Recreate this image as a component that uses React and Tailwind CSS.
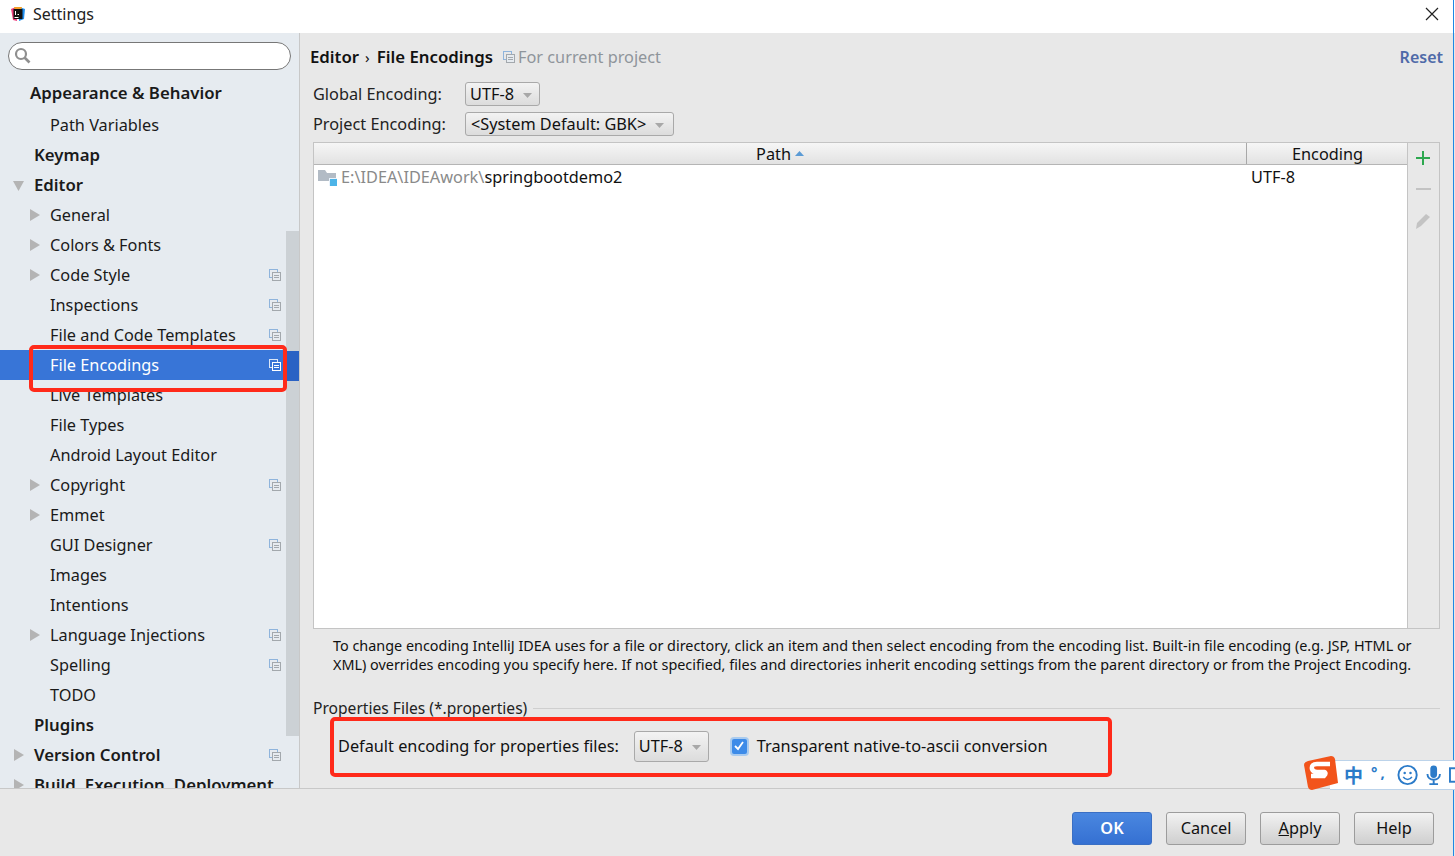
import React from "react";

const F = "[font-family:'Noto_Sans','Noto_Sans_CJK_SC',sans-serif]";

const rows = [
  { t: "Appearance & Behavior", bold: true, x: 30, h: "h-[32px] pb-[2px]" },
  { t: "Path Variables" },
  { t: "Keymap", bold: true },
  { t: "Editor", bold: true, open: true },
  { t: "General", arrow: true },
  { t: "Colors & Fonts", arrow: true },
  { t: "Code Style", arrow: true, copy: true },
  { t: "Inspections", copy: true },
  { t: "File and Code Templates", copy: true },
  { t: "File Encodings", copy: true, sel: true },
  { t: "Live Templates" },
  { t: "File Types" },
  { t: "Android Layout Editor" },
  { t: "Copyright", arrow: true, copy: true },
  { t: "Emmet", arrow: true },
  { t: "GUI Designer", copy: true },
  { t: "Images" },
  { t: "Intentions" },
  { t: "Language Injections", arrow: true, copy: true },
  { t: "Spelling", copy: true },
  { t: "TODO" },
  { t: "Plugins", bold: true },
  { t: "Version Control", bold: true, arrow: true, copy: true },
  { t: "Build, Execution, Deployment", bold: true, arrow: true },
];

function CopyIcon({ sel, className = "" }) {
  const a = sel ? "#dbe6f7" : "#8fb4dc";
  const b = sel ? "#ffffff" : "#a3a8ad";
  return (
    <svg width="12" height="12" viewBox="0 0 12 12" className={className}>
      <rect x="0.5" y="0.5" width="8" height="8" fill="none" stroke={a} />
      <rect x="3.5" y="3.5" width="8" height="8" fill={sel ? "#3875d7" : "#e6ebf0"} stroke={b} />
      <path d="M5 6.500h5M5 8.500h5" stroke={b} />
    </svg>
  );
}

function Row({ r }) {
  const pad = r.bold ? "pl-[34px]" : "pl-[50px]";
  return (
    <div
      className={`relative flex items-center shrink-0 ${r.h || "h-[30px]"} ${r.sel ? "bg-[#3875d7] text-white" : "text-[#1a1a1a]"} ${r.bold ? "font-semibold text-[16.800px]" : ""} ${r.x ? "pl-[30px]" : pad}`}
    >
      {r.arrow && (
        <svg width="10" height="12" viewBox="0 0 10 12" className={`absolute top-[9px] ${r.bold ? "left-[14px]" : "left-[30px]"}`}>
          <path d="M0 0l10 6-10 6z" fill="#b4b4b4" />
        </svg>
      )}
      {r.open && (
        <svg width="12" height="10" viewBox="0 0 12 10" className="absolute top-[11px] left-[13px]">
          <path d="M0 0h11l-5.500 10z" fill="#b4b4b4" />
        </svg>
      )}
      <span className="whitespace-nowrap">{r.t}</span>
      {r.copy && <CopyIcon sel={r.sel} className="absolute left-[269px] top-[9px]" />}
    </div>
  );
}

function Combo({ children, className = "" }) {
  return (
    <div className={`flex items-center h-[24px] border border-[#a9a9a9] rounded-[3px] bg-gradient-to-b from-[#f3f3f3] to-[#dcdcdc] text-[#111] ${className}`}>
      <span className="whitespace-nowrap">{children}</span>
      <svg width="9" height="5" viewBox="0 0 9 5" className="ml-[9px] mt-[2px]"><path d="M0 0h9L4.500 5z" fill="#a8a8a8" /></svg>
    </div>
  );
}

function Btn({ children, primary }) {
  return (
    <div
      className={`flex items-center justify-center w-[80px] h-[33px] pb-[1px] rounded-[3px] border ${
        primary
          ? "border-[#3a6fc4] bg-gradient-to-b from-[#4a87e0] to-[#3570d2] text-white font-semibold"
          : "border-[#9c9c9c] bg-gradient-to-b from-[#f2f2f2] to-[#cfcfcf] text-[#111]"
      }`}
    >
      {children}
    </div>
  );
}

export default function App() {
  return (
    <div className={`relative w-[1455px] h-[856px] overflow-hidden bg-[#e8e8e8] text-[16.300px] leading-[22px] flex flex-col ${F}`}>
      {/* title bar */}
      <div className="h-[33px] bg-white flex items-center shrink-0 pl-[10px] pb-[5px] text-[#222] text-[16px]">
        <svg width="16" height="16" viewBox="0 0 16 16" className="mr-[7px]">
          <path d="M1 3l5-2 1 14-4-1z" fill="#ee3d7c" />
          <path d="M9 1l6 2-1 10-5 2z" fill="#1f8ff0" />
          <path d="M4 1h8l-1 3H5z" fill="#f59f25" />
          <rect x="3.500" y="3" width="9" height="10" fill="#111" />
          <rect x="4.500" y="11" width="4" height="1" fill="#fff" />
          <path d="M5 5h1v4H5zM8 5h1v3H7.500v1H9V5z" fill="#fff" />
        </svg>
        <span>Settings</span>
        <svg width="14" height="14" viewBox="0 0 14 14" className="ml-auto mr-[16px]">
          <path d="M1 1l12 12M13 1L1 13" stroke="#222" strokeWidth="1.200" fill="none" />
        </svg>
      </div>

      {/* body */}
      <div className="flex h-[755px] shrink-0">
        {/* sidebar */}
        <div className="relative w-[300px] shrink-0 bg-[#e6ebf0] border-r border-[#c8c8c8] overflow-hidden flex flex-col">
          <div className="shrink-0 mx-[8px] mt-[9px] h-[28px] w-[283px] rounded-full border border-[#777] bg-white flex items-center pl-[5px]">
            <svg width="18" height="18" viewBox="0 0 18 18">
              <circle cx="7" cy="7" r="5" fill="none" stroke="#8f8f8f" strokeWidth="2.200" />
              <path d="M10.500 10.500L15.500 15.500" stroke="#8f8f8f" strokeWidth="2.600" />
            </svg>
          </div>
          <div className="h-[8px] shrink-0" />
          <div className="flex flex-col">
            {rows.map((r) => (
              <Row key={r.t} r={r} />
            ))}
          </div>
          {/* scrollbar */}
          <div className="absolute left-[286px] top-[198px] w-[13px] h-[505px] bg-[#ccd1d5]" />
          <div className="absolute left-[286px] top-[318px] w-[13px] h-[30px] bg-[#2a62c4]" />
        </div>

        {/* content */}
        <div className="flex-1 min-w-0 flex flex-col pl-[13px] pr-[15px] relative">
          <div className="flex items-center h-[24px] mt-[12px] -ml-[3px] text-[#111]">
            <span className="font-semibold text-[16.800px]">Editor</span>
            <span className="ml-[6px] mr-[7px] text-[15px]">›</span>
            <span className="font-semibold text-[16.800px]">File Encodings</span>
            <CopyIcon className="ml-[10px] mr-[3px]" />
            <span className="text-[#8f959b]">For current project</span>
            <span className="ml-auto -mr-[3px] font-semibold text-[#4f6aa8] text-[16px]">Reset</span>
          </div>
          <div className="flex items-center h-[24px] mt-[13px] text-[#222]">
            <span className="w-[152px]">Global Encoding:</span>
            <Combo className="pl-[4px] pr-[7px]">UTF-8</Combo>
          </div>
          <div className="flex items-center h-[24px] mt-[6px] text-[#222]">
            <span className="w-[152px]">Project Encoding:</span>
            <Combo className="pl-[5px] pr-[9px]">&lt;System Default: GBK&gt;</Combo>
          </div>

          {/* table */}
          <div className="flex h-[487px] mt-[6px] border border-[#c4c4c4]">
            <div className="flex-1 min-w-0 flex flex-col bg-white border-r border-[#c4c4c4]">
              <div className="flex h-[22px] shrink-0 border-b border-[#b5b5b5] bg-gradient-to-b from-[#f6f6f6] to-[#e2e2e2] text-[#111]">
                <div className="w-[933px] flex items-center justify-center border-r border-[#a8a8a8]">
                  Path
                  <svg width="9" height="5" viewBox="0 0 9 5" className="ml-[4px]"><path d="M0 5h9L4.500 0z" fill="#5b9bd5" /></svg>
                </div>
                <div className="flex-1 flex items-center justify-center pl-[1px]">Encoding</div>
              </div>
              <div className="flex items-center h-[24px] text-[#111]">
                <div className="w-[933px] flex items-center pl-[4px]">
                  <svg width="19" height="17" viewBox="0 0 19 17" className="mr-[4px]">
                    <path d="M0 1h7l2 3h9v8H0z" fill="#b2bbc5" />
                    <rect x="11" y="9" width="8" height="8" fill="#e8f2fb" />
                    <rect x="12" y="10" width="7" height="7" fill="#4db4e8" />
                  </svg>
                  <span className="text-[#8a8a8a]">E:\IDEA\IDEAwork\</span>
                  <span>springbootdemo2</span>
                </div>
                <span className="pl-[4px]">UTF-8</span>
              </div>
            </div>
            <div className="w-[31px] shrink-0 flex flex-col items-center pt-[7px]">
              <svg width="16" height="16" viewBox="0 0 16 16" className="-ml-[2px]"><path d="M8 1v14M1 8h14" stroke="#2da84f" strokeWidth="2" /></svg>
              <svg width="16" height="16" viewBox="0 0 16 16" className="mt-[15px] -ml-[2px]"><path d="M1 8h15" stroke="#c3c3c3" strokeWidth="2" /></svg>
              <svg width="16" height="18" viewBox="0 0 16 18" className="mt-[15px] -ml-[2px]"><path d="M1 17l1-6 9-9 4 3-9 9z" fill="#c3c3c3" /></svg>
            </div>
          </div>

          <p className="ml-[20px] mt-[7px] w-[1100px] text-[14.400px] leading-[19px] text-[#111]">
            To change encoding IntelliJ IDEA uses for a file or directory, click an item and then select encoding from the encoding list. Built-in file encoding (e.g. JSP, HTML or XML) overrides encoding you specify here. If not specified, files and directories inherit encoding settings from the parent directory or from the Project Encoding.
          </p>

          <div className="flex items-center mt-[23px] h-[22px] text-[15.600px] text-[#222]">
            <span className="whitespace-nowrap">Properties Files (*.properties)</span>
            <div className="flex-1 h-px bg-[#cfcfcf] ml-[6px]" />
          </div>

          <div className="flex items-center mt-[11px] ml-[25px] h-[32px] text-[#111]">
            <span className="whitespace-nowrap">Default encoding for properties files:</span>
            <Combo className="ml-[15px] h-[31px] pl-[4px] pr-[7px]">UTF-8</Combo>
            <div className="ml-[21px] w-[19px] h-[19px] rounded-[4px] bg-[#3d8be8] border-2 border-[#a9cbef] flex items-center justify-center">
              <svg width="12" height="12" viewBox="0 0 12 12"><path d="M2 6l3 3 5-7" fill="none" stroke="#fff" strokeWidth="1.800" /></svg>
            </div>
            <span className="ml-[8px] whitespace-nowrap">Transparent native-to-ascii conversion</span>
          </div>
        </div>
      </div>

      {/* footer */}
      <div className="flex-1 border-t border-[#c8c8c8] flex items-start justify-end gap-[14px] pt-[23px] pr-[21px] text-[#111]">
        <Btn primary>OK</Btn>
        <Btn>Cancel</Btn>
        <Btn><span><u>A</u>pply</span></Btn>
        <Btn>Help</Btn>
      </div>

      {/* screen edge behind the dialog */}
      <div className="absolute left-[1453px] top-0 w-px h-full bg-[#1e88e5]" />

      {/* annotations */}
      <div className="absolute left-[29px] top-[345px] w-[258px] h-[47px] border-[4px] border-[#ff2a1a] rounded-[5px]" />
      <div className="absolute left-[330px] top-[717px] w-[782px] h-[60px] border-[4px] border-[#ff2a1a] rounded-[5px]" />

      {/* IME bar */}
      <div className="absolute left-[1330px] top-[760px] w-[125px] h-[30px] bg-white border-y border-[#bcd3ea] flex items-center pl-[14px] text-[#2b7bc9]">
        <span className="text-[19px] font-bold [font-family:'Noto_Sans_CJK_SC',sans-serif]">中</span>
        <span className="ml-[8px] text-[15px] font-bold tracking-[3px] -mt-[6px]">°,</span>
        <svg width="22" height="22" viewBox="0 0 22 22" className="ml-[9px]">
          <circle cx="11" cy="11" r="9.500" fill="none" stroke="#2b7bc9" strokeWidth="2" />
          <circle cx="8" cy="9" r="1.300" fill="#2b7bc9" /><circle cx="14" cy="9" r="1.300" fill="#2b7bc9" />
          <path d="M6.500 13c2 3.500 7 3.500 9 0" fill="none" stroke="#2b7bc9" strokeWidth="1.500" />
        </svg>
        <svg width="16" height="22" viewBox="0 0 16 22" className="ml-[8px]">
          <rect x="4.500" y="1" width="7" height="13" rx="3.500" fill="#2b7bc9" />
          <path d="M1.500 10c0 8 13 8 13 0M8 16v4M3.500 20.500h9" fill="none" stroke="#2b7bc9" strokeWidth="2" />
        </svg>
        <svg width="6" height="16" viewBox="0 0 6 16" className="ml-[8px]"><rect x="1" y="1" width="12" height="14" fill="none" stroke="#2b7bc9" strokeWidth="2" /></svg>
      </div>
      <svg width="34" height="34" viewBox="0 0 34 34" className="absolute left-[1304px] top-[756px]">
        <path d="M4 5L27 0q3 0 4 3l3 24-26 7q-3 0-4-3L0 9q0-3 4-4z" fill="#f2541b" />
        <path d="M26 8H13q-6 0-5 5 1 3 5 3h7q3 1 0 4H7" fill="none" stroke="#fff" strokeWidth="4.500" />
      </svg>
    </div>
  );
}
